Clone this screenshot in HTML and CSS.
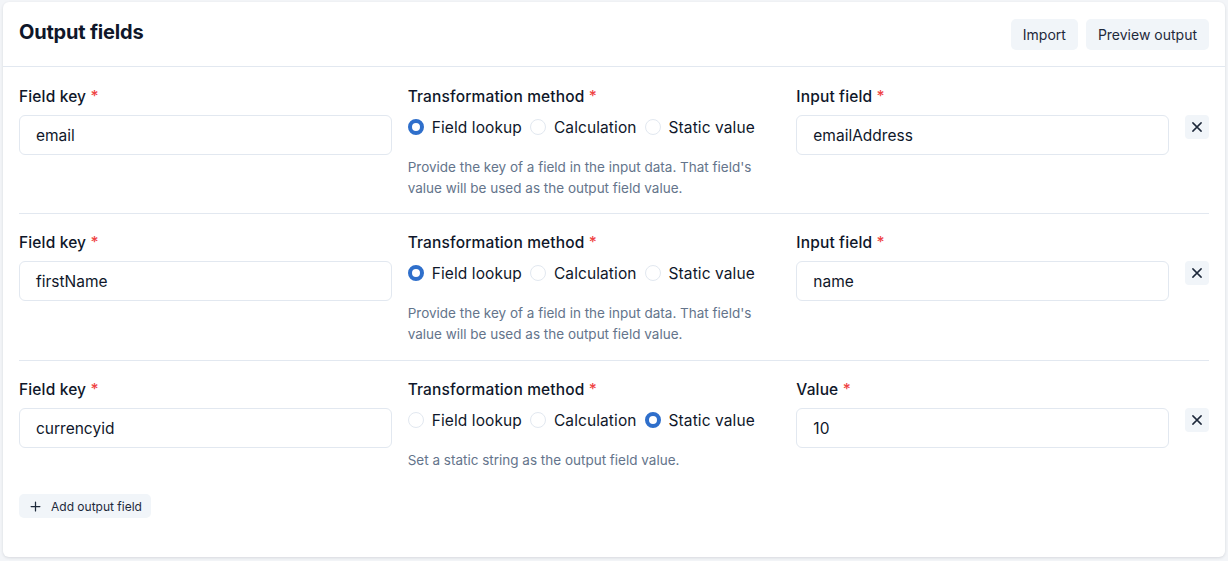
FILE: index.html
```html
<!DOCTYPE html>
<html>
<head>
<meta charset="utf-8">
<link rel="stylesheet" href="styles.css">
</head>
<body>
<div class="card">
  <div class="card-header">
    <h2 class="title">Output fields</h2>
    <div class="actions">
      <button class="btn">Import</button>
      <button class="btn">Preview output</button>
    </div>
  </div>
  <div class="rows">
    <div class="row">
      <div class="col">
        <div class="label">Field key <span class="req">*</span></div>
        <div class="input">email</div>
      </div>
      <div class="col">
        <div class="label">Transformation method <span class="req">*</span></div>
        <div class="radios">
          <span class="radio on"></span><span class="rlabel">Field lookup</span>
          <span class="radio"></span><span class="rlabel">Calculation</span>
          <span class="radio"></span><span class="rlabel">Static value</span>
        </div>
        <p class="help">Provide the key of a field in the input data. That field's value will be used as the output field value.</p>
      </div>
      <div class="col">
        <div class="label">Input field <span class="req">*</span></div>
        <div class="input">emailAddress</div>
      </div>
      <button class="xbtn"><svg viewBox="0 0 24 24" width="18" height="18"><path d="M6.5 6.5l11 11M17.5 6.5l-11 11" stroke="#1e293b" stroke-width="2" stroke-linecap="round" fill="none"/></svg></button>
    </div>
    <div class="row">
      <div class="col">
        <div class="label">Field key <span class="req">*</span></div>
        <div class="input">firstName</div>
      </div>
      <div class="col">
        <div class="label">Transformation method <span class="req">*</span></div>
        <div class="radios">
          <span class="radio on"></span><span class="rlabel">Field lookup</span>
          <span class="radio"></span><span class="rlabel">Calculation</span>
          <span class="radio"></span><span class="rlabel">Static value</span>
        </div>
        <p class="help">Provide the key of a field in the input data. That field's value will be used as the output field value.</p>
      </div>
      <div class="col">
        <div class="label">Input field <span class="req">*</span></div>
        <div class="input">name</div>
      </div>
      <button class="xbtn"><svg viewBox="0 0 24 24" width="18" height="18"><path d="M6.5 6.5l11 11M17.5 6.5l-11 11" stroke="#1e293b" stroke-width="2" stroke-linecap="round" fill="none"/></svg></button>
    </div>
    <div class="row last">
      <div class="col">
        <div class="label">Field key <span class="req">*</span></div>
        <div class="input">currencyid</div>
      </div>
      <div class="col">
        <div class="label">Transformation method <span class="req">*</span></div>
        <div class="radios">
          <span class="radio"></span><span class="rlabel">Field lookup</span>
          <span class="radio"></span><span class="rlabel">Calculation</span>
          <span class="radio on"></span><span class="rlabel">Static value</span>
        </div>
        <p class="help">Set a static string as the output field value.</p>
      </div>
      <div class="col">
        <div class="label">Value <span class="req">*</span></div>
        <div class="input">10</div>
      </div>
      <button class="xbtn"><svg viewBox="0 0 24 24" width="18" height="18"><path d="M6.5 6.5l11 11M17.5 6.5l-11 11" stroke="#1e293b" stroke-width="2" stroke-linecap="round" fill="none"/></svg></button>
    </div>
  </div>
  <div class="footer">
    <button class="addbtn"><svg viewBox="0 0 24 24" width="15" height="15"><path d="M12 5v14M5 12h14" stroke="#1e293b" stroke-width="2" stroke-linecap="round" fill="none"/></svg><span>Add output field</span></button>
  </div>
</div>
</body>
</html>
```
FILE: styles.css
```css
* { box-sizing: border-box; }
html, body { margin: 0; padding: 0; }
body {
  background: #f3f5f8;
  font-family: "Inter", "Liberation Sans", sans-serif;
  color: #0f172a;
  padding: 2px 3px 4px 3px;
}
.card {
  background: #fff;
  border-radius: 6px;
  box-shadow: 0 1px 3px rgba(15, 23, 42, 0.12);
  height: 555px;
}
.card-header {
  display: flex;
  align-items: center;
  justify-content: space-between;
  height: 65px;
  padding: 0 16px;
  border-bottom: 1px solid #e2e8f0;
}
.title {
  margin: 0 0 4px;
  font-size: 20px;
  font-weight: 700;
  letter-spacing: -0.2px;
}
.actions { display: flex; gap: 8px; }
.btn {
  font-family: inherit;
  font-size: 14px;
  color: #1e293b;
  background: #f1f5f9;
  border: none;
  border-radius: 5px;
  height: 31px;
  padding: 0 12px;
}
.rows { padding: 0 16px; }
.row {
  display: grid;
  grid-template-columns: 1fr 1fr 1fr 24px;
  column-gap: 16px;
  padding: 19px 0 15px;
  border-bottom: 1px solid #e2e8f0;
}
.row:first-child { padding-top: 20px; padding-bottom: 14px; }
.row.last { border-bottom: none; padding-bottom: 16px; }
.label {
  font-size: 15.5px;
  line-height: 20px;
  font-weight: 500;
  letter-spacing: 0.15px;
  height: 20px;
  margin-bottom: 8px;
  color: #0f172a;
}
.req { color: #ef4444; }
.input {
  height: 40px;
  border: 1px solid #e2e8f0;
  border-radius: 6px;
  padding: 0 16px;
  display: flex;
  align-items: center;
  font-size: 15.5px;
  color: #0f172a;
}
.radios {
  display: flex;
  align-items: center;
  height: 24px;
  margin-top: 1px;
  margin-bottom: -1px;
  font-size: 15.5px;
  letter-spacing: 0.1px;
}
.radio {
  width: 16px;
  height: 16px;
  border-radius: 50%;
  border: 1px solid #e2e8f0;
  margin-right: 8px;
  flex: none;
}
.radio.on {
  border: 4.5px solid #2f6fcb;
  background: #fff;
}
.rlabel { margin-right: 8px; }
.help {
  margin: 19px 0 0;
  font-size: 13.5px;
  line-height: 21px;
  color: #64748b;
  padding-right: 10px;
}
.xbtn {
  margin-top: 28px;
  width: 24px;
  height: 24px;
  border: none;
  border-radius: 4px;
  background: #f1f5f9;
  padding: 0;
  display: flex;
  align-items: center;
  justify-content: center;
}
.footer { padding: 7px 16px; }
.addbtn {
  display: inline-flex;
  align-items: center;
  gap: 8px;
  height: 24px;
  padding: 0 9px;
  border: none;
  border-radius: 5px;
  background: #f1f5f9;
  font-family: inherit;
  font-size: 12px;
  color: #1e293b;
}
```
